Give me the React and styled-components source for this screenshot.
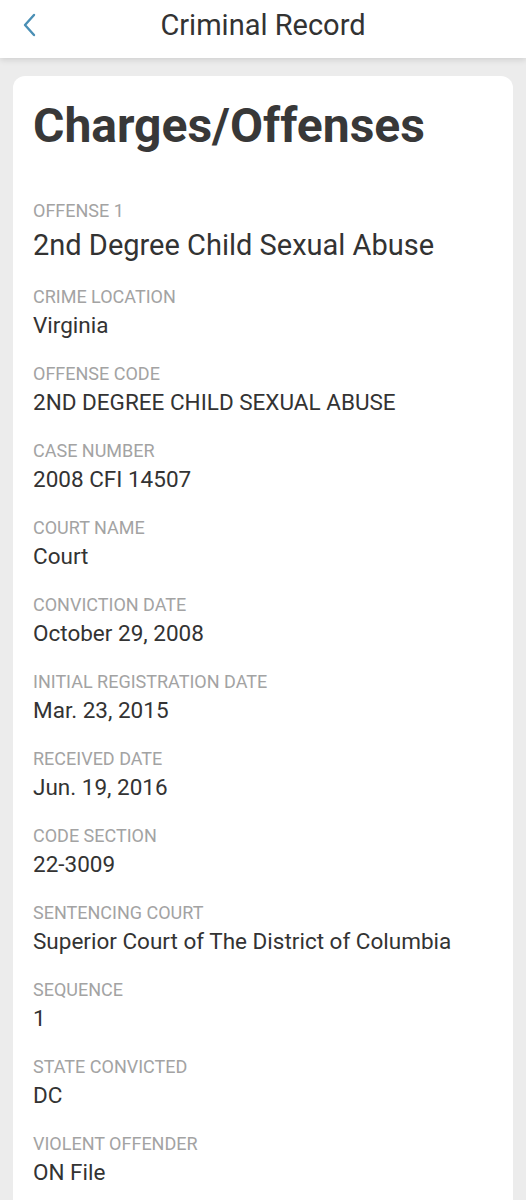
import React from "react";
import styled, { createGlobalStyle } from "styled-components";

const GlobalStyle = createGlobalStyle`
  html, body {
    margin: 0;
    padding: 0;
    background: #ececec;
    font-family: Roboto, "Liberation Sans", sans-serif;
  }
`;

const Page = styled.div`
  min-height: 1200px;
  background: #ececec;
`;

const Header = styled.header`
  height: 58px;
  background: #fff;
  box-shadow: 0 2px 6px rgba(0, 0, 0, 0.12);
  display: flex;
  align-items: center;
  justify-content: center;
  position: relative;
`;

const BackButton = styled.button`
  position: absolute;
  left: 14px;
  top: 10px;
  width: 30px;
  height: 30px;
  border: 0;
  background: none;
  padding: 0;
  display: flex;
  align-items: center;
  justify-content: center;
`;

const HeaderTitle = styled.h1`
  margin: 0;
  margin-top: -8px;
  font-size: 29px;
  font-weight: 400;
  color: #333;
`;

const Card = styled.section`
  margin: 18px 13px 0;
  background: #fff;
  border-radius: 12px;
  padding: 22px 20px 40px;
  min-height: 1200px;
`;

const Title = styled.h2`
  margin: 0 0 46px;
  font-size: 48px;
  font-weight: 700;
  color: #383838;
  line-height: 56px;
`;

const Field = styled.div`
  margin-bottom: 23px;
`;

const Label = styled.div`
  font-size: 18px;
  line-height: 22px;
  color: #a3a3a3;
  text-transform: uppercase;
`;

const Value = styled.div`
  font-size: ${({ $big }) => ($big ? "29px" : "22.5px")};
  line-height: ${({ $big }) => ($big ? "36px" : "30px")};
  margin-top: ${({ $big }) => ($big ? "5px" : "2px")};
  color: #333;
`;

const fields = [
  ["Offense 1", "2nd Degree Child Sexual Abuse", true],
  ["Crime Location", "Virginia"],
  ["Offense Code", "2ND DEGREE CHILD SEXUAL ABUSE"],
  ["Case Number", "2008 CFI 14507"],
  ["Court Name", "Court"],
  ["Conviction Date", "October 29, 2008"],
  ["Initial Registration Date", "Mar. 23, 2015"],
  ["Received Date", "Jun. 19, 2016"],
  ["Code Section", "22-3009"],
  ["Sentencing Court", "Superior Court of The District of Columbia"],
  ["Sequence", "1"],
  ["State Convicted", "DC"],
  ["Violent Offender", "ON File"],
];

export default function App() {
  return (
    <Page>
      <GlobalStyle />
      <Header>
        <BackButton aria-label="Back">
          <svg width="16" height="26" viewBox="0 0 16 26">
            <path
              d="M13 3 L4 13 L13 23"
              fill="none"
              stroke="#4a8fb5"
              strokeWidth="2.4"
              strokeLinecap="round"
              strokeLinejoin="round"
            />
          </svg>
        </BackButton>
        <HeaderTitle>Criminal Record</HeaderTitle>
      </Header>
      <Card>
        <Title>Charges/Offenses</Title>
        {fields.map(([label, value, big]) => (
          <Field key={label}>
            <Label>{label}</Label>
            <Value $big={big}>{value}</Value>
          </Field>
        ))}
      </Card>
    </Page>
  );
}
